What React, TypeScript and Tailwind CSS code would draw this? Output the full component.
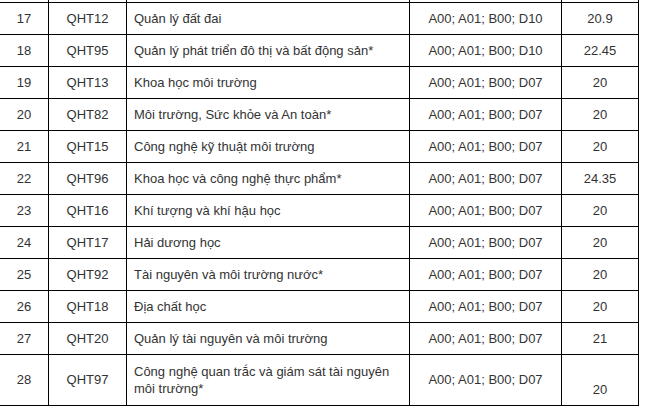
const rows = [
  { stt: "17", code: "QHT12", name: "Quản lý đất đai", combo: "A00; A01; B00; D10", score: "20.9" },
  { stt: "18", code: "QHT95", name: "Quản lý phát triển đô thị và bất động sản*", combo: "A00; A01; B00; D10", score: "22.45" },
  { stt: "19", code: "QHT13", name: "Khoa học môi trường", combo: "A00; A01; B00; D07", score: "20" },
  { stt: "20", code: "QHT82", name: "Môi trường, Sức khỏe và An toàn*", combo: "A00; A01; B00; D07", score: "20" },
  { stt: "21", code: "QHT15", name: "Công nghệ kỹ thuật môi trường", combo: "A00; A01; B00; D07", score: "20" },
  { stt: "22", code: "QHT96", name: "Khoa học và công nghệ thực phẩm*", combo: "A00; A01; B00; D07", score: "24.35" },
  { stt: "23", code: "QHT16", name: "Khí tượng và khí hậu học", combo: "A00; A01; B00; D07", score: "20" },
  { stt: "24", code: "QHT17", name: "Hải dương học", combo: "A00; A01; B00; D07", score: "20" },
  { stt: "25", code: "QHT92", name: "Tài nguyên và môi trường nước*", combo: "A00; A01; B00; D07", score: "20" },
  { stt: "26", code: "QHT18", name: "Địa chất học", combo: "A00; A01; B00; D07", score: "20" },
  { stt: "27", code: "QHT20", name: "Quản lý tài nguyên và môi trường", combo: "A00; A01; B00; D07", score: "21" },
];

const td = "border border-black px-[7px] py-0 align-middle";

export default function App() {
  return (
    <div
      className="w-[650px] h-[410px] overflow-hidden bg-white text-[13px] leading-[17px] text-[#333]"
      style={{ fontFamily: '"Liberation Sans", Arial, sans-serif' }}
    >
      <table className="border-collapse table-fixed w-[639px] -ml-px">
        <colgroup>
          <col className="w-[49px]" />
          <col className="w-[78px]" />
          <col className="w-[283px]" />
          <col className="w-[152px]" />
          <col className="w-[77px]" />
        </colgroup>
        <tbody>
          {/* tail of the row above, cut off */}
          <tr className="h-[2px]">
            <td className="border-x border-black p-0" />
            <td className="border-x border-black p-0" />
            <td className="border-x border-black p-0" />
            <td className="border-x border-black p-0" />
            <td className="border-x border-black p-0" />
          </tr>
          {rows.map((r) => (
            <tr key={r.stt} className="h-[32px]">
              <td className={`${td} text-center`}>{r.stt}</td>
              <td className={`${td} text-center`}>{r.code}</td>
              <td className={td}>{r.name}</td>
              <td className={`${td} text-center`}>{r.combo}</td>
              <td className={`${td} text-center`}>{r.score}</td>
            </tr>
          ))}
          <tr className="h-[51px]">
            <td className={`${td} text-center`}>28</td>
            <td className={`${td} text-center`}>QHT97</td>
            <td className={td}>Công nghệ quan trắc và giám sát tài nguyên môi trường*</td>
            <td className={`${td} text-center`}>A00; A01; B00; D07</td>
            <td className="border border-black px-[7px] pt-0 pb-[7px] align-bottom text-center">20</td>
          </tr>
        </tbody>
      </table>
    </div>
  );
}
